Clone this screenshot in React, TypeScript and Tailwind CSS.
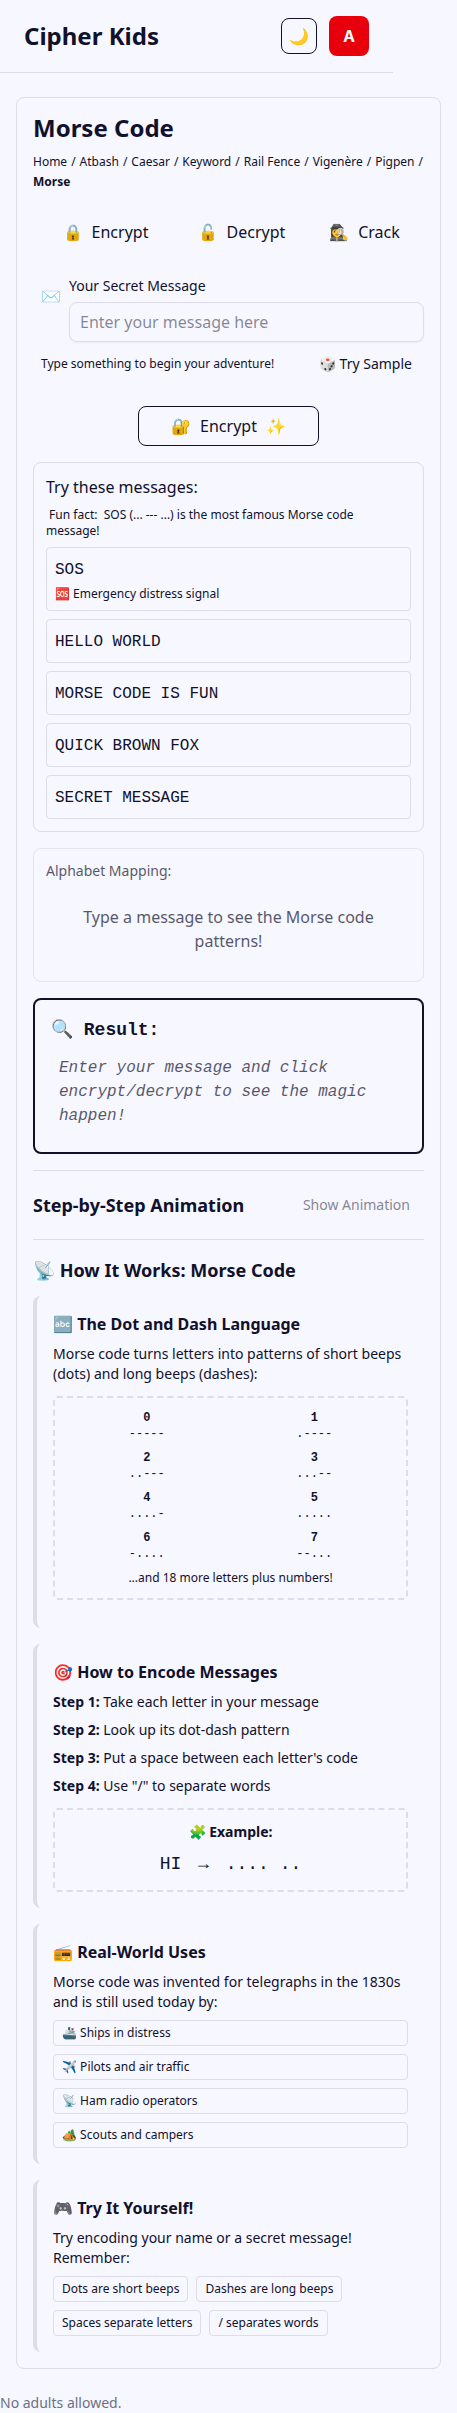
import React from "react";

const BREADCRUMBS = ["Home", "Atbash", "Caesar", "Keyword", "Rail Fence", "Vigenère", "Pigpen"];

const MESSAGES: { text: string; note?: string }[] = [
  { text: "SOS", note: "🆘 Emergency distress signal" },
  { text: "HELLO WORLD" },
  { text: "MORSE CODE IS FUN" },
  { text: "QUICK BROWN FOX" },
  { text: "SECRET MESSAGE" },
];

const DIGITS = [
  ["0", "-----"],
  ["1", ".----"],
  ["2", "..---"],
  ["3", "...--"],
  ["4", "....-"],
  ["5", "....."],
  ["6", "-...."],
  ["7", "--..."],
];

const STEPS = [
  "Take each letter in your message",
  "Look up its dot-dash pattern",
  "Put a space between each letter's code",
  'Use "/" to separate words',
];

const USES = ["🚢 Ships in distress", "✈️ Pilots and air traffic", "📡 Ham radio operators", "🏕️ Scouts and campers"];

const TIPS = ["Dots are short beeps", "Dashes are long beeps", "Spaces separate letters", "/ separates words"];

const MODES = [
  ["🔒", "Encrypt"],
  ["🔓", "Decrypt"],
  ["🕵️‍♀️", "Crack"],
];

function InfoCard({ title, children }: { title: string; children: React.ReactNode }) {
  return (
    <section className="rounded-lg border-l-4 border-[#dcdceb] p-4">
      <h3 className="mb-2 text-base font-bold">{title}</h3>
      {children}
    </section>
  );
}

export default function App() {
  return (
    <div className="bg-[#f7f7ff] font-['Noto_Sans',sans-serif] text-base text-[#11112b]">
      <header className="mr-16 flex items-center justify-between border-b border-[#dcdceb] px-6 py-4">
        <a href="#" className="text-2xl font-bold">
          Cipher Kids
        </a>
        <div className="flex items-center gap-3">
          <button
            type="button"
            aria-label="Toggle theme"
            className="flex size-9 items-center justify-center rounded-lg border border-[#11112b]"
          >
            🌙
          </button>
          <button type="button" className="size-10 rounded-lg bg-red-600 font-bold text-white">
            A
          </button>
        </div>
      </header>

      <main className="mx-4 mt-6 rounded-lg border border-[#dcdceb] p-4">
        <h1 className="text-2xl/7 font-bold">Morse Code</h1>
        <nav aria-label="Ciphers" className="mt-3 flex flex-wrap gap-1 text-xs">
          {BREADCRUMBS.map((name) => (
            <React.Fragment key={name}>
              <a href="#">{name}</a>
              <span>/</span>
            </React.Fragment>
          ))}
          <a href="#" aria-current="page" className="font-bold">
            Morse
          </a>
        </nav>

        <div className="mt-[22px] grid grid-cols-[145fr_127fr_119fr]">
          {MODES.map(([icon, label]) => (
            <button key={label} type="button" className="flex h-10 items-center justify-center gap-[9px]">
              <span>{icon}</span>
              <span>{label}</span>
            </button>
          ))}
        </div>

        <div className="mt-6 flex gap-2 pl-2">
          <span className="mt-2">✉️</span>
          <div className="min-w-0 flex-1">
            <label htmlFor="message" className="block text-sm">
              Your Secret Message
            </label>
            <input
              id="message"
              type="text"
              placeholder="Enter your message here"
              className="mt-1.5 block h-10 w-full rounded-lg border border-[#dcdceb] px-2.5 shadow-xs placeholder:text-[#11112b]/50"
            />
          </div>
        </div>
        <div className="mt-1 flex h-9 items-center justify-between pl-2">
          <p className="text-xs">Type something to begin your adventure!</p>
          <button type="button" className="h-9 px-3 text-sm">
            🎲 Try Sample
          </button>
        </div>

        <div className="mt-6 flex justify-center">
          <button
            type="button"
            className="flex h-10 items-center gap-[9px] rounded-lg border border-[#11112b] px-8"
          >
            <span>🔐</span>
            <span>Encrypt</span>
            <span>✨</span>
          </button>
        </div>

        <section className="mt-4 rounded-lg border border-[#dcdceb] p-3">
          <h2>Try these messages:</h2>
          <p className="mt-2 pr-3 text-xs">
            {"\u00a0Fun fact:\u00a0 SOS (... --- ...) is the most famous Morse code message!"}
          </p>
          <div className="mt-2 flex flex-col gap-2">
            {MESSAGES.map(({ text, note }) => (
              <button
                key={text}
                type="button"
                className="rounded border border-[#dcdceb] px-2 pt-2.5 pb-2 text-left"
              >
                <span className="block font-['Liberation_Mono',monospace]">{text}</span>
                {note && <span className="mt-1 block text-xs">{note}</span>}
              </button>
            ))}
          </div>
        </section>

        <section className="mt-4 rounded-lg border border-[#dcdceb] p-3 opacity-70">
          <h2 className="text-sm">Alphabet Mapping:</h2>
          <p className="mt-2 p-4 text-center">Type a message to see the Morse code patterns!</p>
        </section>

        <section className="mt-4 rounded-lg border-2 border-[#11112b] p-4 font-['Liberation_Mono',monospace]">
          <h2 className="text-lg/7 font-bold">🔍 Result:</h2>
          <p className="mt-1 p-2 italic opacity-70">Enter your message and click encrypt/decrypt to see the magic happen!</p>
        </section>

        <section className="mt-4 flex items-center justify-between border-y border-[#dcdceb] py-4">
          <h2 className="text-lg font-bold">Step-by-Step Animation</h2>
          <button type="button" disabled className="h-9 px-3.5 text-sm opacity-50">
            Show Animation
          </button>
        </section>

        <h2 className="mt-4 text-lg font-bold">📡 How It Works: Morse Code</h2>
        <div className="mt-3 flex flex-col gap-4">
          <InfoCard title="🔤 The Dot and Dash Language">
            <p className="text-sm">Morse code turns letters into patterns of short beeps (dots) and long beeps (dashes):</p>
            <div className="my-3 rounded border-2 border-dashed border-[#dcdceb] p-3 text-center text-xs">
              <dl className="grid grid-cols-2 gap-2 font-['Liberation_Mono',monospace]">
                {DIGITS.map(([digit, code]) => (
                  <div key={digit}>
                    <dt className="font-bold">{digit}</dt>
                    <dd>{code}</dd>
                  </div>
                ))}
              </dl>
              <p className="mt-2">...and 18 more letters plus numbers!</p>
            </div>
          </InfoCard>

          <InfoCard title="🎯 How to Encode Messages">
            <ol className="flex flex-col gap-2 text-sm">
              {STEPS.map((step, i) => (
                <li key={step}>
                  <strong className="font-bold">Step {i + 1}:</strong> {step}
                </li>
              ))}
            </ol>
            <div className="mt-3 rounded border-2 border-dashed border-[#dcdceb] p-3 text-center">
              <p className="text-sm font-bold">🧩 Example:</p>
              <p className="mt-2 font-['Liberation_Mono',monospace] text-lg">
                HI <span className="px-1.5">→</span> .... ..
              </p>
            </div>
          </InfoCard>

          <InfoCard title="📻 Real-World Uses">
            <p className="text-sm">Morse code was invented for telegraphs in the 1830s and is still used today by:</p>
            <ul className="mt-2 flex flex-col gap-2 text-xs">
              {USES.map((use) => (
                <li key={use} className="rounded border border-[#dcdceb] px-2 py-1">
                  {use}
                </li>
              ))}
            </ul>
          </InfoCard>

          <InfoCard title="🎮 Try It Yourself!">
            <p className="text-sm">Try encoding your name or a secret message! Remember:</p>
            <ul className="mt-2 flex flex-wrap gap-2 text-xs">
              {TIPS.map((tip) => (
                <li key={tip} className="rounded border border-[#dcdceb] px-2 py-1">
                  {tip}
                </li>
              ))}
            </ul>
          </InfoCard>
        </div>
      </main>

      <footer className="mt-6 text-sm text-gray-500">No adults allowed.</footer>
    </div>
  );
}
